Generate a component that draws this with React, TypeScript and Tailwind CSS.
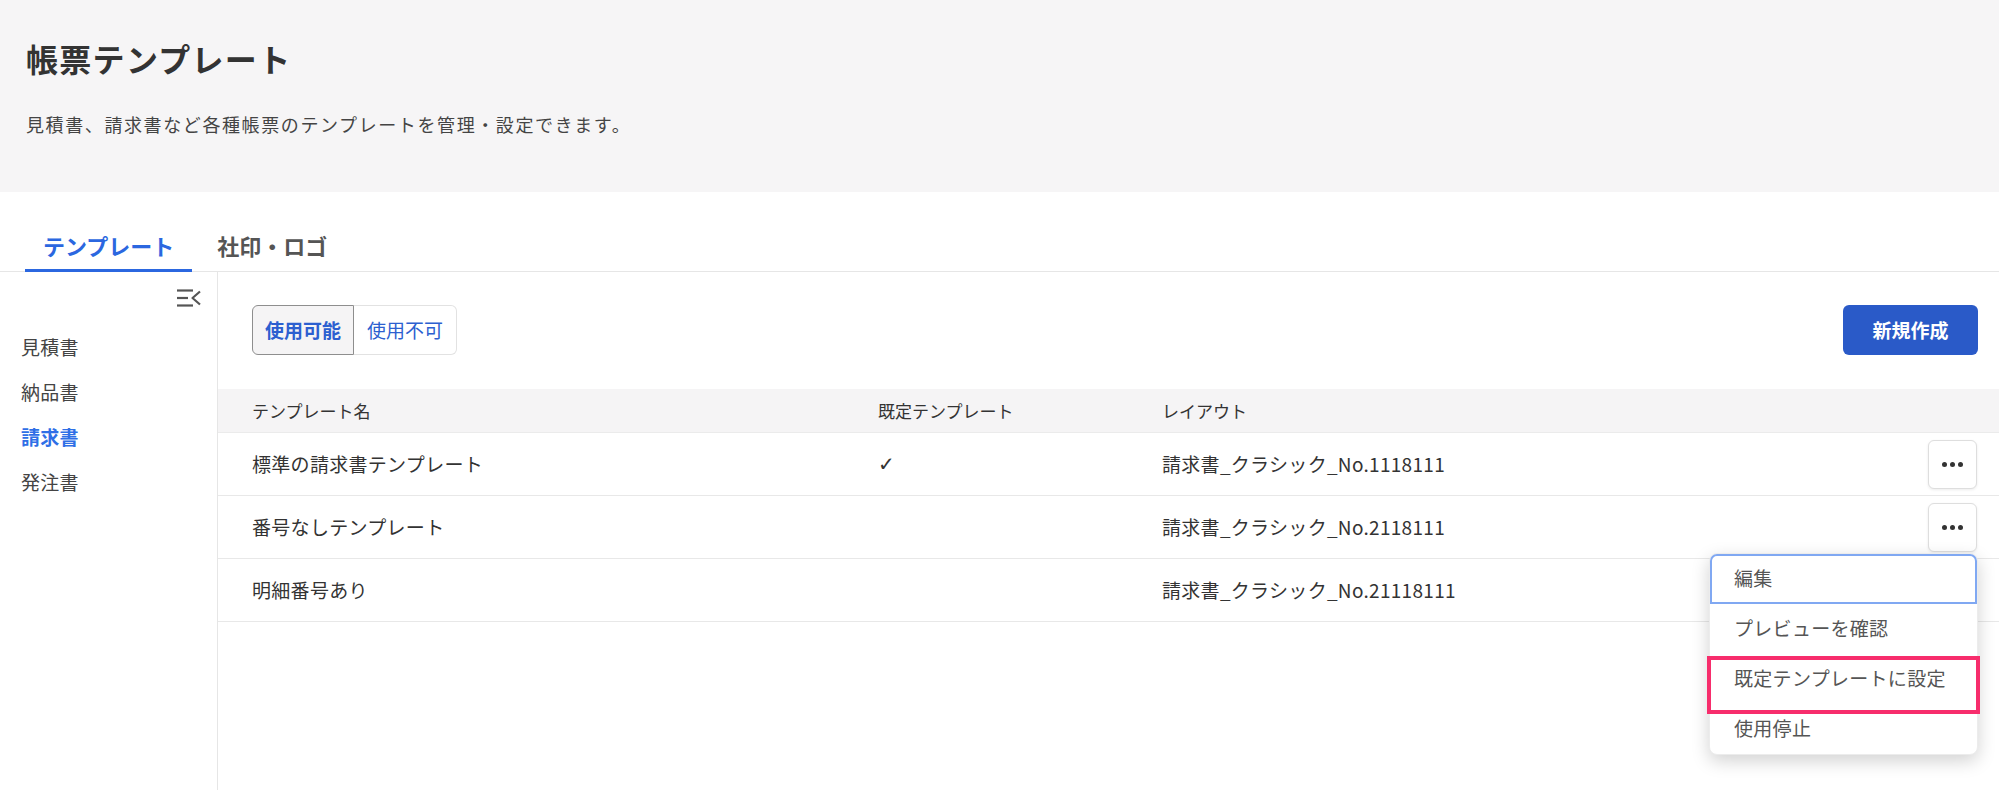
import React from "react";

const font = { fontFamily: '"Noto Sans CJK JP", "Noto Sans", sans-serif' };

function CollapseIcon() {
  return (
    <svg width="25" height="18" viewBox="0 0 25 18" fill="none" stroke="#555" strokeWidth="2.2" strokeLinecap="butt">
      <line x1="0" y1="1.5" x2="16" y2="1.5" />
      <line x1="0" y1="9" x2="11" y2="9" />
      <line x1="0" y1="16.5" x2="16" y2="16.5" />
      <polyline points="23,2.5 15.5,9 23,15.5" strokeLinejoin="round" />
    </svg>
  );
}

function Dots() {
  return (
    <div className="flex items-center gap-[3px]">
      <span className="block w-[5px] h-[5px] rounded-full bg-[#333]" />
      <span className="block w-[5px] h-[5px] rounded-full bg-[#333]" />
      <span className="block w-[5px] h-[5px] rounded-full bg-[#333]" />
    </div>
  );
}

function MoreButton() {
  return (
    <button className="w-[49px] h-[49px] flex items-center justify-center rounded-[6px] border border-[#dedede] bg-white shadow-[0_1px_3px_rgba(0,0,0,0.08)]">
      <Dots />
    </button>
  );
}

const rows = [
  { name: "標準の請求書テンプレート", def: true, layout: "請求書_クラシック_No.1118111", menu: false, noButton: false },
  { name: "番号なしテンプレート", def: false, layout: "請求書_クラシック_No.2118111", menu: true, noButton: false },
  { name: "明細番号あり", def: false, layout: "請求書_クラシック_No.21118111", menu: false, noButton: true },
];

export default function App() {
  return (
    <div style={font} className="w-[1999px] h-[790px] overflow-hidden bg-white text-[#333] flex flex-col">
      {/* Header */}
      <div className="h-[192px] shrink-0 bg-[#f6f5f6] pl-[26px]">
        <div className="pt-[37px] text-[32px] leading-[42px] font-semibold text-[#333] tracking-[1.3px]">帳票テンプレート</div>
        <div className="mt-[31px] text-[18px] leading-[28px] text-[#444] tracking-[1.6px]">
          見積書、請求書など各種帳票のテンプレートを管理・設定できます。
        </div>
      </div>

      {/* Tabs */}
      <div className="shrink-0 flex gap-[7px] border-b border-[#e6e6e6] pl-[25px] pt-[26px]">
        <div className="-mb-px px-[18px] pt-[14px] pb-[11px] leading-[26px] text-[22px] font-bold text-[#2b67e0] border-b-[3px] border-[#2b67e0]">
          テンプレート
        </div>
        <div className="-mb-px px-[18px] pt-[14px] pb-[11px] leading-[26px] text-[22px] font-bold text-[#555] border-b-[3px] border-transparent">
          社印・ロゴ
        </div>
      </div>

      {/* Body */}
      <div className="flex flex-1 min-h-0">
        {/* Sidebar */}
        <div className="w-[218px] shrink-0 border-r border-[#e6e6e6]">
          <div className="flex justify-end pr-[15px] pt-[17px] h-[35px]">
            <CollapseIcon />
          </div>
          <div className="mt-[17px] pl-[21px] text-[19px] text-[#444] tracking-[0.3px]">
            <div className="leading-[45px]">見積書</div>
            <div className="leading-[45px]">納品書</div>
            <div className="leading-[45px] font-bold text-[#2f6fe6]">請求書</div>
            <div className="leading-[45px]">発注書</div>
          </div>
        </div>

        {/* Main */}
        <div className="flex-1 min-w-0">
          <div className="flex items-center justify-between pl-[34px] pr-[21px] pt-[33px]">
            <div className="flex h-[50px] text-[19px]">
              <div className="w-[102px] flex items-center justify-center rounded-l-[6px] border-[1.5px] border-[#8e8e8e] bg-[#f5f4f5] font-bold text-[#2c5fd0]">
                使用可能
              </div>
              <div className="w-[103px] flex items-center justify-center rounded-r-[6px] border border-l-0 border-[#e2e2e2] bg-white text-[#2c5fd0]">
                使用不可
              </div>
            </div>
            <button className="w-[135px] h-[50px] rounded-[6px] bg-[#2a5ac8] text-white text-[19px] font-bold">
              新規作成
            </button>
          </div>

          {/* Table */}
          <div className="mt-[34px]">
            <div className="grid grid-cols-[660px_284px_1fr] h-[44px] items-center bg-[#f5f4f5] border-b border-[#ebebeb] text-[17px] text-[#333]">
              <div className="pl-[34px]">テンプレート名</div>
              <div>既定テンプレート</div>
              <div>レイアウト</div>
            </div>
            {rows.map((r, i) => (
              <div key={i} className="grid grid-cols-[660px_284px_1fr] h-[63px] items-center border-b border-[#e8e8e8] text-[19px] text-[#333] tracking-[0.3px]">
                <div className="pl-[34px]">{r.name}</div>
                <div className="text-[20px]" style={{ fontFamily: '"DejaVu Sans", sans-serif' }}>{r.def ? "✓" : ""}</div>
                <div className="flex items-center justify-between pr-[22px]">
                  <span>{r.layout}</span>
                  {!r.noButton && (
                    <div className="relative">
                      <MoreButton />
                      {r.menu && (
                        <div className="absolute right-[-1px] top-[50px] z-10 w-[269px] rounded-[8px] bg-white shadow-[0_6px_18px_rgba(0,0,0,0.18)] border border-[#ececec] text-[19px] text-[#555] tracking-[0.3px]">
                          <div className="h-[50px] flex items-center pl-[22px] rounded-t-[7px] border-2 border-[#80a8f2]">編集</div>
                          <div className="h-[50px] flex items-center pl-[24px]">プレビューを確認</div>
                          <div className="h-[50px] flex items-center pl-[24px]">既定テンプレートに設定</div>
                          <div className="h-[50px] flex items-center pl-[24px]">使用停止</div>
                          <div className="absolute left-[-3px] top-[102px] w-[273px] h-[58px] border-[4px] border-[#f72d6c]" />
                        </div>
                      )}
                    </div>
                  )}
                </div>
              </div>
            ))}
          </div>
        </div>
      </div>
    </div>
  );
}
